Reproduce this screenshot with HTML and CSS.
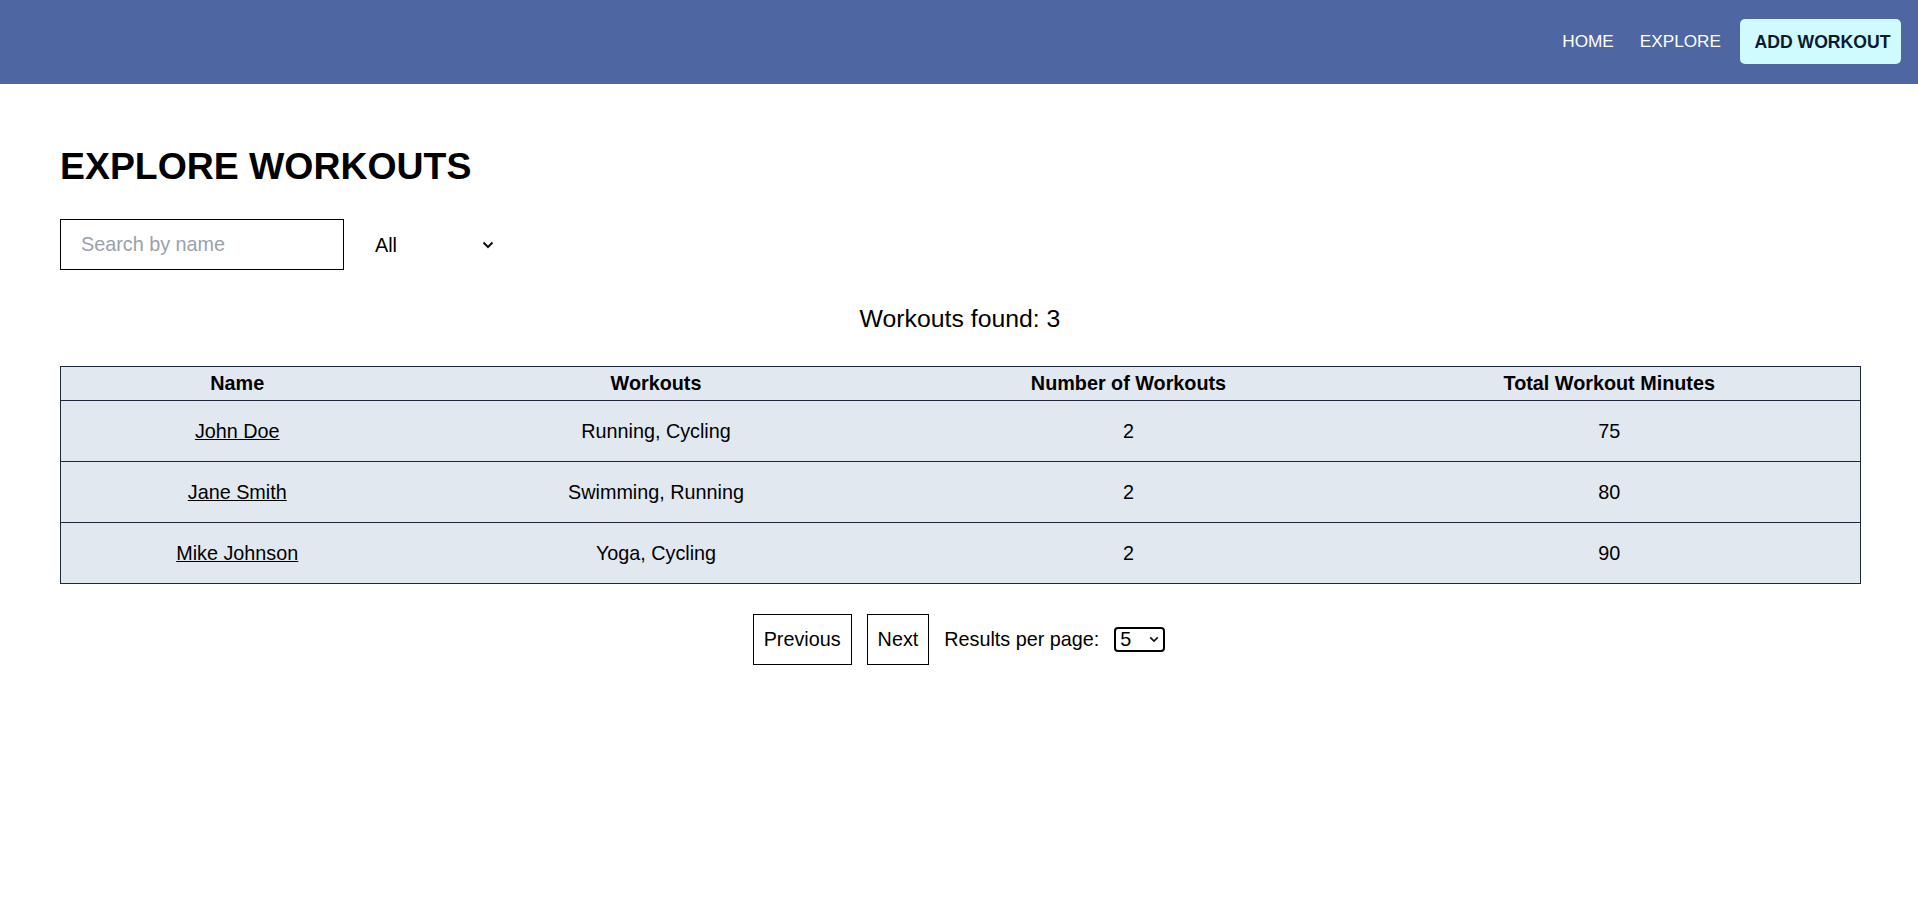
FILE: index.html
```html
<!DOCTYPE html>
<html lang="en">
<head>
<meta charset="utf-8">
<title>Explore Workouts</title>
<link rel="stylesheet" href="styles.css">
</head>
<body>
<header class="topbar">
  <nav class="nav">
    <a class="nav-link nav-home" href="#">HOME</a>
    <a class="nav-link nav-explore" href="#">EXPLORE</a>
    <a class="nav-btn" href="#">ADD WORKOUT</a>
  </nav>
</header>
<main class="main">
  <h1 class="title">EXPLORE WORKOUTS</h1>
  <div class="controls">
    <input class="search" type="text" placeholder="Search by name">
    <div class="select-wrap">
      <select class="filter">
        <option>All</option>
        <option>Running</option>
        <option>Cycling</option>
        <option>Swimming</option>
        <option>Yoga</option>
      </select>
      <svg class="chev chev-filter" width="12" height="8" viewBox="0 0 12 8"><path d="M1.5 1.5 L6 6 L10.5 1.5" fill="none" stroke="#111" stroke-width="2"/></svg>
    </div>
  </div>
  <p class="found">Workouts found: 3</p>
  <table class="tbl">
    <colgroup>
      <col class="c1"><col class="c2"><col class="c3"><col class="c4">
    </colgroup>
    <thead>
      <tr><th>Name</th><th>Workouts</th><th>Number of Workouts</th><th>Total Workout Minutes</th></tr>
    </thead>
    <tbody>
      <tr><td><a href="#">John Doe</a></td><td>Running, Cycling</td><td>2</td><td>75</td></tr>
      <tr><td><a href="#">Jane Smith</a></td><td>Swimming, Running</td><td>2</td><td>80</td></tr>
      <tr><td><a href="#">Mike Johnson</a></td><td>Yoga, Cycling</td><td>2</td><td>90</td></tr>
    </tbody>
  </table>
  <div class="pager">
    <button class="pbtn">Previous</button>
    <button class="pbtn">Next</button>
    <span class="per-label">Results per page:</span>
    <div class="select-wrap">
      <select class="per">
        <option>5</option>
        <option>10</option>
        <option>20</option>
      </select>
      <svg class="chev chev-per" width="12" height="8" viewBox="0 0 12 8"><path d="M1.5 1.5 L6 6 L10.5 1.5" fill="none" stroke="#111" stroke-width="2"/></svg>
    </div>
  </div>
</main>
</body>
</html>
```
FILE: styles.css
```css
* { box-sizing: border-box; }
html, body { margin: 0; padding: 0; background: #fff; }
body {
  font-family: "Liberation Sans", Arial, Helvetica, sans-serif;
  color: #000;
  font-size: 19.8px;
}
.topbar {
  height: 84px;
  background: #4e66a1;
  display: flex;
  justify-content: flex-end;
  align-items: center;
  padding-right: 17px;
  padding-bottom: 1px;
}
.nav { display: flex; align-items: center; }
.nav-link {
  color: #fff;
  text-decoration: none;
  font-size: 17.2px;
}
.nav-home { margin-right: 26px; }
.nav-explore { margin-right: 19px; }
.nav-btn {
  display: flex;
  justify-content: center;
  align-items: center;
  width: 161px;
  height: 45px;
  background: #cffafe;
  color: #0b1a33;
  font-weight: bold;
  font-size: 17.6px;
  line-height: 20px;
  padding: 0 0 0 4px;
  border-radius: 5px;
  text-decoration: none;
  white-space: nowrap;
}
.main { padding: 61px 58px 0 60px; }
.title {
  margin: 0;
  font-size: 37.4px;
  line-height: 43px;
  font-weight: bold;
}
.controls {
  margin-top: 31px;
  display: flex;
  align-items: center;
}
.search {
  width: 284px;
  height: 51px;
  border: 1px solid #000;
  border-radius: 0;
  padding: 0 20px;
  font-family: inherit;
  font-size: 19.8px;
  color: #000;
  outline: none;
}
.search::placeholder { color: #9aa1ad; }
.select-wrap { position: relative; display: flex; align-items: center; }
.filter {
  appearance: none;
  -webkit-appearance: none;
  margin-left: 11px;
  width: 150px;
  height: 51px;
  border: none;
  background: transparent;
  font-family: inherit;
  font-size: 19.8px;
  color: #000;
  padding: 0 30px 0 20px;
}
.chev { position: absolute; pointer-events: none; }
.chev-filter { right: 11px; top: 22px; width: 12px; height: 8px; }
.found {
  margin: 34px 0 0;
  text-align: center;
  font-size: 24.8px;
  line-height: 29px;
}
.tbl {
  margin-top: 33px;
  width: 1800px;
  table-layout: fixed;
  border-collapse: collapse;
  background: #e2e8f0;
  border: 1px solid #1e293b;
}
.c1 { width: 353px; }
.c2 { width: 485px; }
.c3 { width: 460px; }
.c4 { width: 502px; }
.tbl th {
  font-weight: bold;
  font-size: 19.8px;
  line-height: 23px;
  padding: 5px 0 5px;
  text-align: center;
  border-bottom: 1px solid #1e293b;
}
.tbl td {
  font-size: 19.8px;
  line-height: 23px;
  padding: 19px 0 18px;
  text-align: center;
  border-bottom: 1px solid #1e293b;
}
.tbl td a { color: #000; text-decoration: underline; }
.pager {
  margin-top: 30px;
  display: flex;
  justify-content: center;
  align-items: center;
  gap: 15px;
  padding-right: 2px;
}
.pbtn {
  background: #fff;
  border: 1px solid #000;
  border-radius: 0;
  font-family: inherit;
  font-size: 19.8px;
  line-height: 23px;
  padding: 13px 10px;
  color: #000;
  margin: 0;
}
.per-label { font-size: 19.8px; }
.per {
  appearance: none;
  -webkit-appearance: none;
  width: 51px;
  height: 25px;
  border: 2px solid #000;
  border-radius: 4px;
  background: #fff;
  font-family: inherit;
  font-size: 19.8px;
  line-height: 21px;
  padding: 0 0 0 4px;
  color: #000;
}
.chev-per { right: 6px; top: 9px; width: 10px; height: 7px; }
```
